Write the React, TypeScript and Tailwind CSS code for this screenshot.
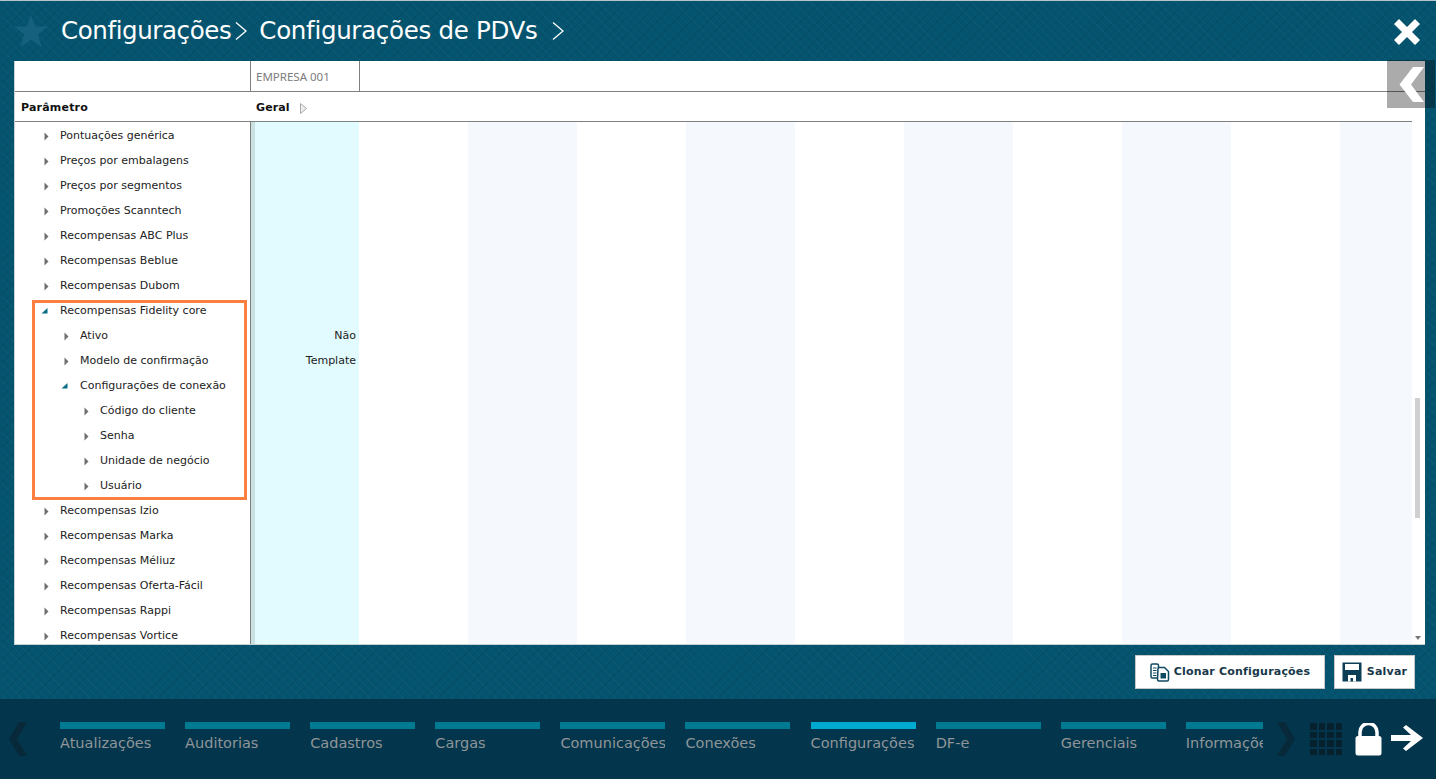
const rows = [
  { label: "Pontuações genérica", level: 0 },
  { label: "Preços por embalagens", level: 0 },
  { label: "Preços por segmentos", level: 0 },
  { label: "Promoções Scanntech", level: 0 },
  { label: "Recompensas ABC Plus", level: 0 },
  { label: "Recompensas Beblue", level: 0 },
  { label: "Recompensas Dubom", level: 0 },
  { label: "Recompensas Fidelity core", level: 0, open: true },
  { label: "Ativo", level: 1, value: "Não" },
  { label: "Modelo de confirmação", level: 1, value: "Template" },
  { label: "Configurações de conexão", level: 1, open: true },
  { label: "Código do cliente", level: 2 },
  { label: "Senha", level: 2 },
  { label: "Unidade de negócio", level: 2 },
  { label: "Usuário", level: 2 },
  { label: "Recompensas Izio", level: 0 },
  { label: "Recompensas Marka", level: 0 },
  { label: "Recompensas Méliuz", level: 0 },
  { label: "Recompensas Oferta-Fácil", level: 0 },
  { label: "Recompensas Rappi", level: 0 },
  { label: "Recompensas Vortice", level: 0 },
];

const tabs = ["Atualizações", "Auditorias", "Cadastros", "Cargas", "Comunicações", "Conexões", "Configurações", "DF-e", "Gerenciais", "Informações"];

const stripes = [false, true, false, true, false, true, false, true, false, true];

const pattern =
  "[background-image:repeating-linear-gradient(45deg,#ffffff06_0_1px,transparent_1px_6px),repeating-linear-gradient(-45deg,#00000012_0_1px,transparent_1px_6px)]";

function Arrow({ open }: { open?: boolean }) {
  if (open) {
    return (
      <svg width="7" height="7" viewBox="0 0 7 7" className="-ml-[3px] -mt-[3px] shrink-0">
        <path d="M6.500 1v5.500H0.500z" fill="#0a6f86" />
      </svg>
    );
  }
  return (
    <svg width="5" height="9" viewBox="0 0 5 9" className="shrink-0">
      <path d="M0.500 0.500l4 4-4 4z" fill="#6f6f6f" />
    </svg>
  );
}

function TreeRow({ label, level, open }: { label: string; level: number; open?: boolean }) {
  const indent = level === 0 ? "pl-[29px]" : level === 1 ? "pl-[49px]" : "pl-[69px]";
  return (
    <div className={`relative flex h-[25px] items-center whitespace-nowrap text-[11px] text-[#222] ${indent}`}>
      <span className="flex w-[16px] items-center">
        <Arrow open={open} />
      </span>
      {label}
    </div>
  );
}

function CloneIcon() {
  return (
    <svg width="20" height="19" viewBox="0 0 20 19" fill="none" stroke="#0f4a60" strokeWidth="1.500">
      <path d="M1 2.500a1.500 1.500 0 0 1 1.500-1.500h4.500a1.500 1.500 0 0 1 1.500 1.500v11a1.500 1.500 0 0 1-1.500 1.500h-4.500a1.500 1.500 0 0 1-1.500-1.500z" fill="#fff" />
      <path d="M3 5h3.500M3 7.500h3.500M3 10h3.500M3 12.500h3.500" strokeWidth="1" />
      <path d="M8 6a1.500 1.500 0 0 1 1.500-1.500h5l4 4v8a1.500 1.500 0 0 1-1.500 1.500h-8a1.500 1.500 0 0 1-1.500-1.500z" fill="#fff" />
      <path d="M10.500 10h5.500v5.500h-5.500z" fill="#0f4a60" stroke="none" />
    </svg>
  );
}

function SaveIcon() {
  return (
    <svg width="20" height="20" viewBox="0 0 20 20">
      <path d="M0.500 0.500h19v19h-19z" fill="#0c3f55" />
      <path d="M3 2h14v6h-14z" fill="#fff" />
      <path d="M6 13h8v6.500h-8z" fill="#fff" />
      <path d="M8.500 16h2.500v3.500h-2.500z" fill="#0c3f55" />
    </svg>
  );
}

export default function App() {
  return (
    <div className={`relative flex h-[779px] w-[1436px] flex-col overflow-hidden bg-[#05546f] font-['DejaVu_Sans',Verdana,sans-serif] ${pattern}`}>
      {/* cabecalho */}
      <header className="flex h-[61px] shrink-0 items-center border-t-[1px] border-[#b9c4c8] pl-[14px] pr-[15px]">
        <svg width="34" height="33" viewBox="0 0 34 33" className="mr-[13px] shrink-0">
          <path d="M17 0l4.400 11.600H34l-10 8 3.900 12.600L17 24.800 6.100 32.200 10 19.600l-10-8h12.600z" fill="#15607c" />
        </svg>
        <span className="text-[24.5px] tracking-[-0.4px] text-white">Configurações</span>
        <svg width="14" height="20" viewBox="0 0 14 20" className="ml-[3px] shrink-0" fill="none" stroke="#fff" strokeWidth="1.300">
          <path d="M2 1.500l10 8.500-10 8.500" />
        </svg>
        <span className="ml-[11px] text-[24.5px] tracking-[-0.3px] text-white">Configurações de PDVs</span>
        <svg width="14" height="20" viewBox="0 0 14 20" className="ml-[14px] shrink-0" fill="none" stroke="#fff" strokeWidth="1.300">
          <path d="M2 1.500l10 8.500-10 8.500" />
        </svg>
        <svg width="26" height="26" viewBox="0 0 26 26" className="ml-auto mr-[1px] mt-[1px] shrink-0">
          <path d="M5 0l8 8 8-8 5 5-8 8 8 8-5 5-8-8-8 8-5-5 8-8-8-8z" fill="#fff" />
        </svg>
      </header>

      {/* painel de parametros */}
      <main className="relative mx-[14px] flex h-[584px] w-[1411px] shrink-0 flex-col overflow-hidden border-l border-b border-[#c8d0d4] bg-white">
        <div className="flex h-[31px] shrink-0 border-b border-[#808080]">
          <div className="w-[236px] border-r border-[#808080]" />
          <div className="flex w-[109px] items-center border-r border-[#808080] pl-[5px] pt-[1px] text-[11.500px] text-[#7c7c7c] font-['Noto_Sans',sans-serif]">
            EMPRESA 001
          </div>
        </div>
        <div className="mr-[13px] flex h-[30px] shrink-0 border-b border-[#808080] pt-[3px]">
          <div className="flex w-[236px] items-center pl-[6px] text-[11px] font-bold tracking-[0.2px] text-[#111]">Parâmetro</div>
          <div className="flex items-center gap-[10px] pl-[5px] text-[11px] font-bold tracking-[0.1px] text-[#111]">
            Geral
            <svg width="7" height="11" viewBox="0 0 7 11">
              <path d="M0.500 0.500l6 5-6 5z" fill="#eee" stroke="#aaa" />
            </svg>
          </div>
        </div>
        <div className="flex min-h-0 flex-1 overflow-hidden">
          <div className="w-[236px] shrink-0 border-r border-[#808080] pt-[2px]">
            {rows.map((row) => (
              <TreeRow key={row.label} label={row.label} level={row.level} open={row.open} />
            ))}
          </div>
          <div className="w-[4px] shrink-0 bg-[#c9e1e1]" />
          <div className="w-[104px] shrink-0 bg-[#e1fbfe] pr-[3px] pt-[2px] text-right text-[11px] text-[#222]">
            {rows.map((row) => (
              <div key={row.label} className="flex h-[25px] items-center justify-end">
                {row.value}
              </div>
            ))}
          </div>
          <div className="flex min-w-0 flex-1">
            {stripes.map((tinted, i) => (
              <div key={i} className={`h-full ${i === 9 ? "w-[72px]" : "w-[109px]"} shrink-0 ${tinted ? "bg-[#f5f9fe]" : "bg-white"}`} />
            ))}
          </div>
          <div className="relative w-[13px] shrink-0">
            <div className="absolute left-[3px] top-[276px] h-[120px] w-[5px] bg-[#cfcfd1]" />
            <div className="absolute bottom-[4px] left-[3px] h-0 w-0 border-x-[3px] border-t-[4px] border-x-transparent border-t-[#777]" />
          </div>
        </div>
        <div className="absolute left-[17px] top-[239px] h-[200px] w-[215px] border-[3px] border-[#ff7f41]" />
      </main>

      {/* botao recolher: preto translucido por cima do painel */}
      <div className="absolute left-[1387px] top-[60px] flex h-[48px] w-[48px] items-center bg-black/33 pl-[12px]">
        <svg width="25" height="35" viewBox="0 0 25 35">
          <path d="M14 0h11L12 17.500 25 35H14L0.500 17.500z" fill="#fff" />
        </svg>
      </div>

      {/* acoes */}
      <div className="flex h-[54px] shrink-0 items-start justify-end gap-[9px] pr-[21px] pt-[10px]">
        <button className="flex h-[34px] w-[190px] items-center justify-center gap-[4px] border border-[#c8c8c8] bg-white text-[11px] font-bold tracking-[0.2px] text-[#17384a]">
          <CloneIcon />
          Clonar Configurações
        </button>
        <button className="flex h-[34px] w-[81px] items-center justify-center gap-[5px] border border-[#c8c8c8] bg-white text-[11px] font-bold tracking-[0.2px] text-[#17384a]">
          <SaveIcon />
          Salvar
        </button>
      </div>

      {/* rodape */}
      <footer className="flex h-[80px] shrink-0 bg-[#03364c]">
        <div className="flex w-[60px] shrink-0 items-start pl-[9px] pt-[23px]">
          <svg width="18" height="34" viewBox="0 0 18 34">
            <path d="M10 0h8L8 17l10 17h-8L0 17z" fill="#08293a" />
          </svg>
        </div>
        <nav className="flex w-[1203px] shrink-0 gap-[20.100px] overflow-hidden pt-[23px]">
          {tabs.map((tab, i) => (
            <div key={tab} className={`${i === 9 ? "w-[77px]" : "w-[105px]"} shrink-0 overflow-hidden`}>
              <div className={`h-[7px] ${i === 6 ? "bg-[#00a9cf]" : "bg-[#007a91]"}`} />
              <div className="mt-[5px] whitespace-nowrap pt-[1px] text-[14.500px] leading-[17px] text-[#8f9599]">{tab}</div>
            </div>
          ))}
        </nav>
        <div className="ml-[14px] flex items-start pt-[23px]">
          <svg width="18" height="34" viewBox="0 0 18 34">
            <path d="M0 0h8l10 17L8 34H0l10-17z" fill="#08293a" />
          </svg>
        </div>
        <div className="ml-[15px] mt-[24px] grid h-[32px] w-[32px] grid-cols-4 gap-[2px]">
          {Array.from({ length: 16 }).map((_, i) => (
            <div key={i} className="bg-[#06202e]" />
          ))}
        </div>
        <svg width="27" height="33" viewBox="0 0 27 33" className="ml-[13px] mt-[24px]">
          <path d="M5 14V9a8.500 8.500 0 0 1 17 0v5" fill="none" stroke="#fff" strokeWidth="3.500" />
          <rect x="0.500" y="13" width="26" height="19.500" rx="2.500" fill="#fff" />
        </svg>
        <svg width="33" height="26" viewBox="0 0 33 26" className="ml-[9px] mt-[26px]">
          <path d="M0 10h20L12 2.500 15 0l17 13-17 13-3-2.500 8-7.500H0z" fill="#fff" />
        </svg>
      </footer>
    </div>
  );
}
